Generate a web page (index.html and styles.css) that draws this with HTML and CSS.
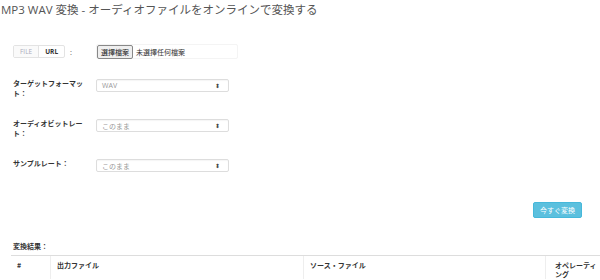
FILE: index.html
```html
<!DOCTYPE html>
<html lang="ja">
<head>
<meta charset="utf-8">
<link rel="stylesheet" href="styles.css">
</head>
<body>
<h1 class="title">MP3 WAV 変換 - オーディオファイルをオンラインで変換する</h1>
<div class="form">
  <div class="row row-file">
    <div class="label-cell">
      <span class="toggle"><span class="tg tg-off">FILE</span><span class="tg tg-on">URL</span></span><span class="colon">:</span>
    </div>
    <div class="file-input">
      <span class="file-btn">選擇檔案</span><span class="file-name">未選擇任何檔案</span>
    </div>
  </div>
  <div class="row row-fmt">
    <div class="label-cell"><span class="lbl">ターゲットフォーマッ<br>ト：</span></div>
    <div class="select"><span>WAV</span><span class="arr">&#x2B0D;</span></div>
  </div>
  <div class="row row-br">
    <div class="label-cell"><span class="lbl">オーディオビットレー<br>ト：</span></div>
    <div class="select"><span>このまま</span><span class="arr">&#x2B0D;</span></div>
  </div>
  <div class="row row-sr">
    <div class="label-cell"><span class="lbl">サンプルレート：</span></div>
    <div class="select"><span>このまま</span><span class="arr">&#x2B0D;</span></div>
  </div>
  <div class="actions"><span class="btn">今すぐ変換</span></div>
</div>
<div class="results">
  <div class="res-title">変換結果：</div>
  <div class="table">
    <div class="th c1">#</div>
    <div class="th c2">出力ファイル</div>
    <div class="th c3">ソース・ファイル</div>
    <div class="th c4">オペレーティ<br>ング</div>
  </div>
</div>
</body>
</html>
```
FILE: styles.css
```css
* { box-sizing: border-box; }
body {
  margin: 0;
  background: #fff;
  font-family: "Open Sans", "Noto Sans CJK JP", sans-serif;
  color: #555;
  width: 600px;
  height: 280px;
  overflow: hidden;
}
.title {
  font-size: 11.5px;
  font-weight: normal;
  color: #555;
  margin: 0;
  padding: 1px 0 0 1px;
  line-height: 18px;
}
.form {
  padding-left: 13px;
  padding-right: 18px;
}
.row {
  display: flex;
  align-items: flex-start;
}
.label-cell {
  width: 83px;
  flex: none;
  font-size: 7px;
  font-weight: bold;
  color: #333;
  font-family: "Noto Sans CJK JP", sans-serif;
  line-height: 10px;
}
.lbl { display: block; white-space: nowrap; }
.row-file { margin-top: 25px; align-items: center; }
.toggle {
  display: inline-flex;
  border: 1px solid #e3e3e3;
  border-radius: 2px;
  height: 13px;
  vertical-align: middle;
}
.tg {
  font-family: "Open Sans", sans-serif;
  font-size: 6.5px;
  line-height: 11px;
  padding: 0 6px;
}
.tg-off { color: #aab; font-weight: normal; border-right: 1px solid #e3e3e3; background: #fafafa; }
.tg-on { color: #333; font-weight: bold; }
.colon { margin-left: 5px; font-weight: normal; color: #666; vertical-align: middle; }
.file-input {
  display: flex;
  align-items: center;
  width: 142px;
  border: 1px solid #f4f4f4;
  border-radius: 2px;
  height: 15px;
  font-family: "Noto Sans CJK TC", sans-serif;
  font-size: 7px;
}
.file-btn {
  border: 1px solid #888;
  background: #efefef;
  border-radius: 2px;
  padding: 0 3px;
  height: 14px;
  line-height: 12px;
  color: #222;
}
.file-name { margin-left: 3px; color: #333; }
.row-fmt { margin-top: 19px; }
.row-br { margin-top: 20px; }
.row-sr { margin-top: 20px; }
.select {
  width: 133px;
  height: 13px;
  border: 1px solid #ddd;
  border-radius: 2px;
  display: flex;
  justify-content: space-between;
  align-items: center;
  padding: 0 8px 0 5px;
  font-size: 7px;
  color: #999;
  font-family: "Open Sans", "Noto Sans CJK JP", sans-serif;
  box-shadow: inset 0 1px 1px rgba(0,0,0,0.04);
  margin-top: 1px;
}
.arr { font-size: 6px; color: #444; font-family: "DejaVu Sans", sans-serif; }
.actions {
  display: flex;
  justify-content: flex-end;
  margin-top: 30px;
}
.btn {
  background: #5bc0de;
  border: 1px solid #46b8da;
  border-radius: 2px;
  color: #fff;
  font-size: 7px;
  font-family: "Noto Sans CJK JP", sans-serif;
  padding: 0 6px;
  height: 16px;
  line-height: 14px;
}
.results { padding-left: 11px; }
.res-title {
  margin-top: 23px;
  padding-left: 2px;
  font-size: 7px;
  font-weight: bold;
  color: #333;
  font-family: "Noto Sans CJK JP", sans-serif;
  line-height: 10px;
}
.table {
  margin-top: 4px;
  border-top: 1px solid #ddd;
  display: grid;
  grid-template-columns: 39px 253px 242px 55px;
  font-family: "Noto Sans CJK JP", sans-serif;
  font-size: 7px;
  font-weight: bold;
  color: #333;
}
.th {
  padding: 5px 6px 0 6px;
  line-height: 9px;
  border-left: 1px solid #eee;
}
.th.c1 { border-left: none; }
.th.c4 { padding-left: 9px; padding-right: 0; white-space: nowrap; }
```
